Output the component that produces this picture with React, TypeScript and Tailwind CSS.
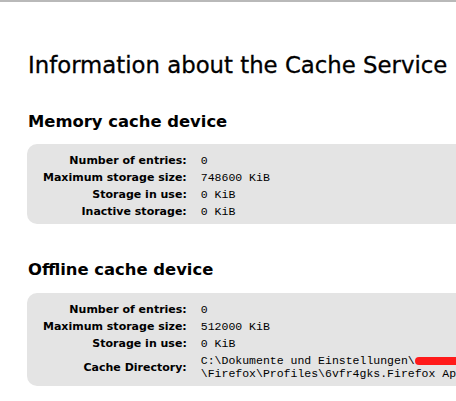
const memoryRows = [
  { label: "Number of entries:", value: "0" },
  { label: "Maximum storage size:", value: "748600 KiB" },
  { label: "Storage in use:", value: "0 KiB" },
  { label: "Inactive storage:", value: "0 KiB" },
];

const offlineRows = [
  { label: "Number of entries:", value: "0" },
  { label: "Maximum storage size:", value: "512000 KiB" },
  { label: "Storage in use:", value: "0 KiB" },
];

const Label = ({ children }: { children: React.ReactNode }) => (
  <div className="flex items-center justify-end py-[2px] text-[11px] leading-[13px] font-bold text-black whitespace-nowrap">
    {children}
  </div>
);

const Value = ({ children }: { children: React.ReactNode }) => (
  <div className="py-[2px] font-['Liberation_Mono',monospace] text-[11.5px] leading-[13px] text-black whitespace-nowrap">
    {children}
  </div>
);

const App = () => {
  return (
    <div className="w-[456px] h-[401px] overflow-hidden bg-white border-t-2 border-[#b9b9b9] font-['DejaVu_Sans',sans-serif]">
      <div className="pl-[28px]">
        <h1 className="mt-[49px] text-[22.8px] leading-[28px] font-normal text-black whitespace-nowrap [-webkit-text-stroke:0.3px_black]">
          Information about the Cache Service
        </h1>

        <h2 className="mt-[33px] text-[16.4px] leading-[20px] font-bold text-black">Memory cache device</h2>
        <div className="mt-[12px] -ml-[1px] w-[640px] rounded-[10px] bg-[#e4e4e4] pt-[8px] pb-[4px] pl-[16px]">
          <div className="grid grid-cols-[auto_1fr] gap-x-[14px]">
            {memoryRows.map(row => (
              <>
                <Label key={row.label}>{row.label}</Label>
                <Value>{row.value}</Value>
              </>
            ))}
          </div>
        </div>

        <h2 className="mt-[36px] text-[16.4px] leading-[20px] font-bold text-black">Offline cache device</h2>
        <div className="mt-[13px] -ml-[1px] w-[640px] rounded-[10px] bg-[#e4e4e4] pt-[8px] pb-[4px] pl-[16px]">
          <div className="grid grid-cols-[auto_1fr] gap-x-[14px]">
            {offlineRows.map(row => (
              <>
                <Label key={row.label}>{row.label}</Label>
                <Value>{row.value}</Value>
              </>
            ))}
            <Label>Cache Directory:</Label>
            <Value>
              C:\Dokumente und Einstellungen\
              <span className="inline-block align-middle w-[44px] h-[8px] rounded-full bg-[#ff1a1a]"></span>
              <br />
              \Firefox\Profiles\6vfr4gks.Firefox App\OfflineCache
            </Value>
          </div>
        </div>
      </div>
    </div>
  );
};

export default App;
